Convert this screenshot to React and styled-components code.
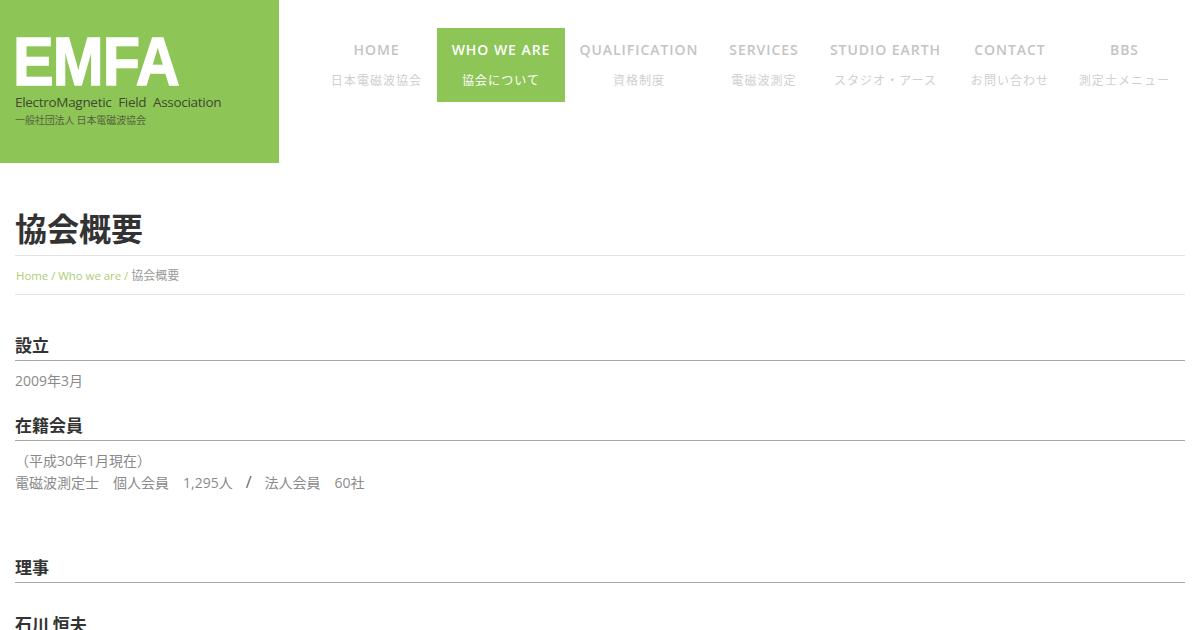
import React from 'react';
import styled, { createGlobalStyle } from 'styled-components';

const CJK = '"Noto Sans CJK JP", sans-serif';

const GlobalStyle = createGlobalStyle`
  html, body {
    margin: 0;
    padding: 0;
    background: #fff;
    height: 630px;
    overflow: hidden;
    font-family: "Open Sans", ${CJK};
  }
`;

const Header = styled.header`
  display: flex;
  justify-content: space-between;
  align-items: flex-start;
  padding-right: 15px;
`;

const Logo = styled.a`
  display: block;
  box-sizing: border-box;
  width: 279px;
  height: 163px;
  background: #8dc556;
  padding: 33px 0 0 15px;
`;

const LogoMark = styled.div`
  font-family: "Liberation Sans", sans-serif;
  font-weight: 700;
  font-size: 69px;
  line-height: 58px;
  height: 58px;
  margin-left: -2px;
  letter-spacing: -1px;
  color: #fff;
  -webkit-text-stroke: 1.4px #fff;
  transform: scaleX(0.885);
  transform-origin: left center;
`;

const LogoName = styled.div`
  font-family: "Open Sans", sans-serif;
  font-size: 13.5px;
  line-height: 16px;
  margin-top: 3px;
  letter-spacing: -0.3px;
  word-spacing: 3.5px;
  color: #3f4a30;
  white-space: nowrap;
`;

const LogoSub = styled.div`
  font-family: ${CJK};
  font-size: 10px;
  line-height: 14px;
  margin-top: 3px;
  letter-spacing: -0.1px;
  color: #55623f;
  white-space: nowrap;
`;

const Nav = styled.nav`
  display: grid;
  grid-template-columns: 121px 128px 148px 102px 141px 108px 121px;
  margin-top: 28px;
`;

const NavItem = styled.a`
  display: flex;
  flex-direction: column;
  align-items: center;
  height: 74px;
  background: ${p => (p.$active ? '#8dc556' : 'transparent')};
  color: ${p => (p.$active ? '#fff' : '#c4c4c4')};
  white-space: nowrap;
`;

const NavTitle = styled.span`
  font-family: "Open Sans", sans-serif;
  font-size: 14px;
  font-weight: 600;
  line-height: 20px;
  margin-top: 12px;
  letter-spacing: 0.95px;
`;

const NavSub = styled.span`
  font-family: ${CJK};
  font-size: 12px;
  line-height: 18px;
  margin-top: 11px;
  letter-spacing: 1.05px;
  color: ${p => (p.$active ? '#fff' : '#cfcfcf')};
`;

const Main = styled.main`
  padding: 0 15px;
`;

const PageTitle = styled.h1`
  margin: 42px 0 0;
  padding-bottom: 6px;
  font-family: ${CJK};
  font-size: 32px;
  font-weight: 700;
  line-height: 44px;
  color: #333;
  border-bottom: 1px solid #e2e2e2;
`;

const Breadcrumb = styled.div`
  display: flex;
  height: 38px;
  align-items: center;
  padding-left: 1px;
  font-size: 12px;
  color: #999;
  border-bottom: 1px solid #e2e2e2;
  font-family: "Open Sans", ${CJK};
`;

const Crumb = styled.a`
  color: #a9cf72;
  font-size: 11.4px;
  white-space: pre;
`;

const SectionTitle = styled.h2`
  margin: ${p => p.$top}px 0 0;
  padding: 1px 0 2px;
  font-family: ${CJK};
  font-size: 17px;
  font-weight: 700;
  line-height: 26px;
  color: #333;
  border-bottom: 1px solid #a8a8a8;
`;

const Body = styled.p`
  margin: 9px 0 0;
  font-family: "Open Sans", ${CJK};
  font-size: 14px;
  line-height: 22px;
  color: #8a8a8a;
  white-space: pre;
`;

const Slash = styled.span`
  color: #666;
  font-size: 16px;
  line-height: 20px;
  padding: 0 13px;
`;

const PersonName = styled.h3`
  margin: 27px 0 0;
  font-family: ${CJK};
  font-size: 17px;
  font-weight: 700;
  line-height: 27px;
  color: #333;
`;

const links = [
  { title: 'HOME', sub: '日本電磁波協会' },
  { title: 'WHO WE ARE', sub: '協会について', active: true },
  { title: 'QUALIFICATION', sub: '資格制度' },
  { title: 'SERVICES', sub: '電磁波測定' },
  { title: 'STUDIO EARTH', sub: 'スタジオ・アース' },
  { title: 'CONTACT', sub: 'お問い合わせ' },
  { title: 'BBS', sub: '測定士メニュー' },
];

export default function App() {
  return (
    <>
      <GlobalStyle />
      <Header>
        <Logo>
          <LogoMark>EMFA</LogoMark>
          <LogoName>ElectroMagnetic Field Association</LogoName>
          <LogoSub>一般社団法人 日本電磁波協会</LogoSub>
        </Logo>
        <Nav>
          {links.map(link => (
            <NavItem key={link.title} $active={link.active}>
              <NavTitle>{link.title}</NavTitle>
              <NavSub $active={link.active}>{link.sub}</NavSub>
            </NavItem>
          ))}
        </Nav>
      </Header>
      <Main>
        <PageTitle>協会概要</PageTitle>
        <Breadcrumb>
          <Crumb>Home / Who we are / </Crumb>
          協会概要
        </Breadcrumb>
        <SectionTitle $top={36}>設立</SectionTitle>
        <Body>2009年3月</Body>
        <SectionTitle $top={19}>在籍会員</SectionTitle>
        <Body>
          （平成30年1月現在）
          {'\n'}電磁波測定士　個人会員　1,295人<Slash>/</Slash>法人会員　60社
        </Body>
        <SectionTitle $top={59}>理事</SectionTitle>
        <PersonName>石川 恒夫</PersonName>
      </Main>
    </>
  );
}
